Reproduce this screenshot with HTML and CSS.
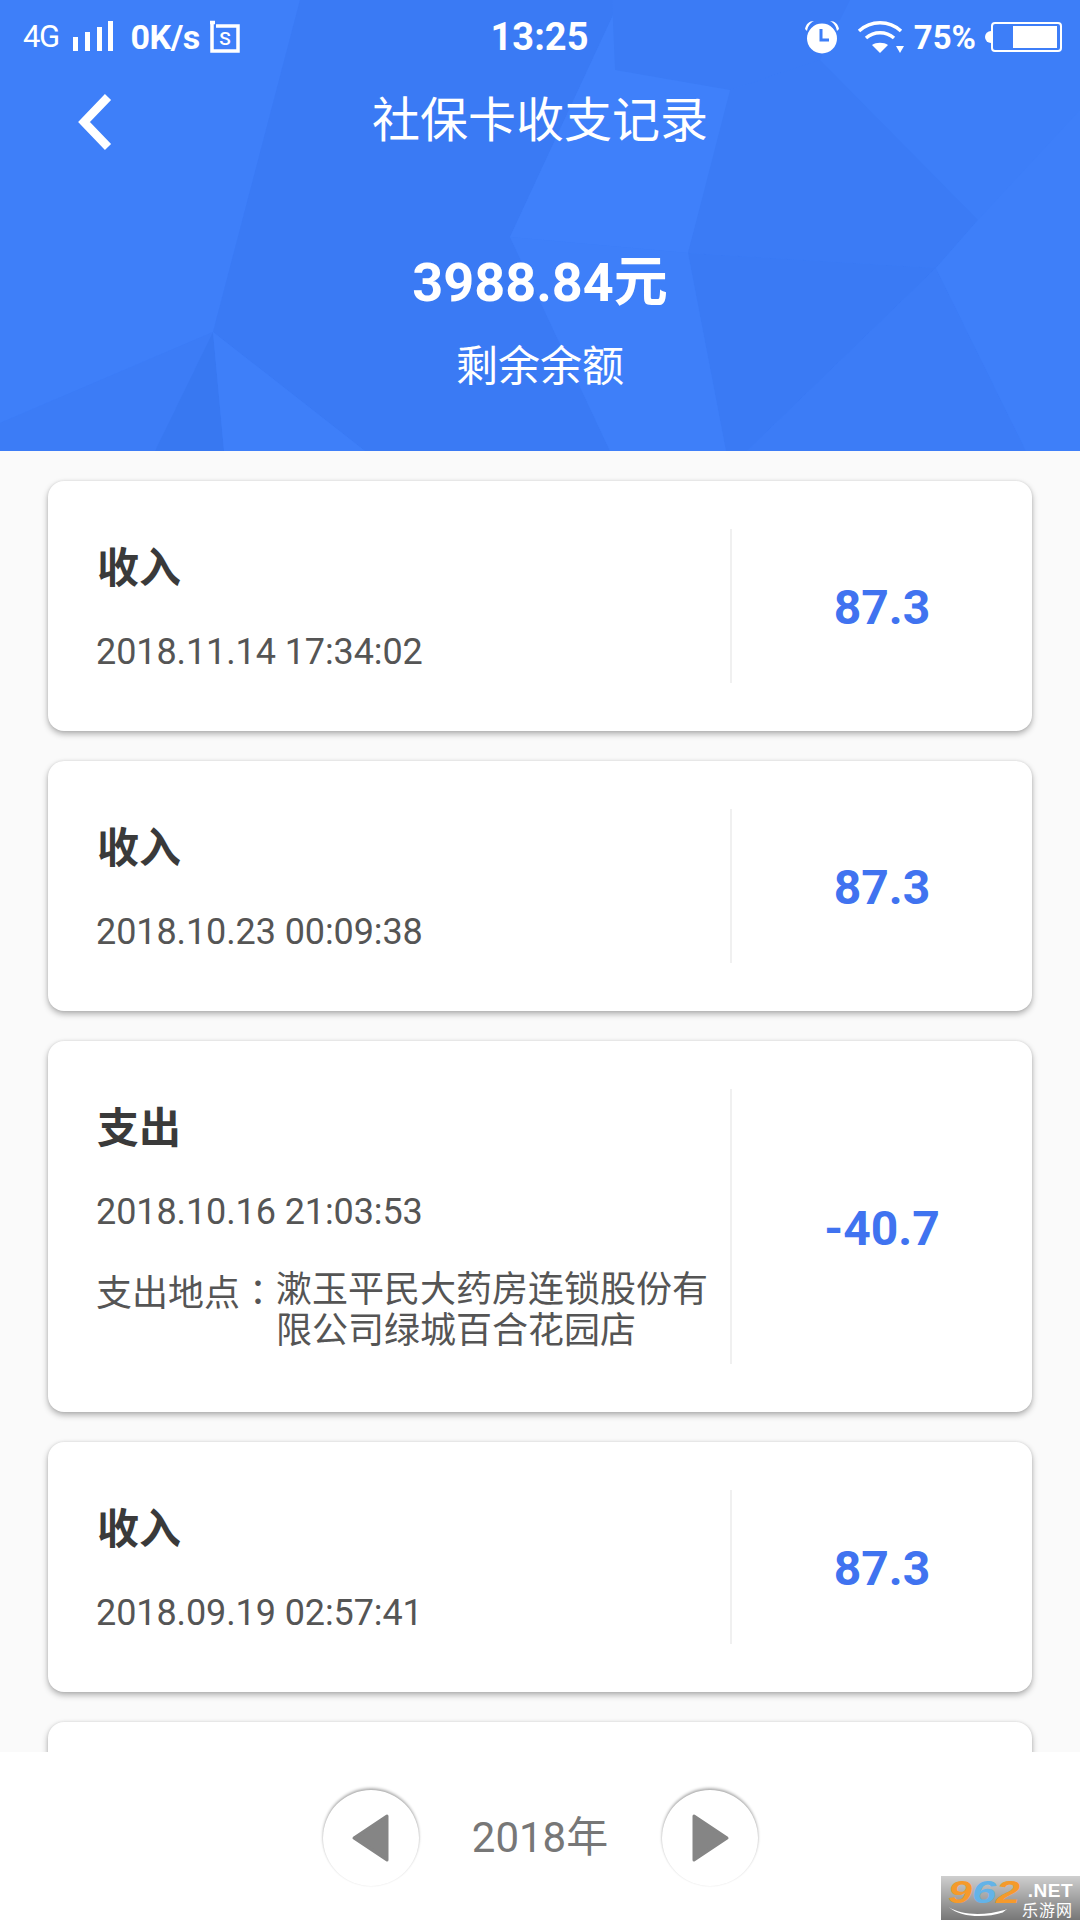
FILE: index.html
```html
<!DOCTYPE html>
<html lang="zh-CN">
<head>
<meta charset="utf-8">
<title>社保卡收支记录</title>
<link rel="stylesheet" href="styles.css">
</head>
<body>
<div class="screen">
  <header class="hero">
    <svg class="facets" viewBox="0 0 1080 451" preserveAspectRatio="none" aria-hidden="true">
      <polygon points="0,0 300,0 213,332 0,423" fill="#3e7ff9"/>
      <polygon points="300,0 620,0 510,237 610,451 365,451 213,332" fill="#3a7af4"/>
      <polygon points="0,423 213,332 155,451 0,451" fill="#3c7cf6"/>
      <polygon points="213,332 224,451 155,451" fill="#3878f1"/>
      <polygon points="213,332 365,451 224,451" fill="#3e7ff9"/>
      <polygon points="620,0 760,0 688,253 510,237" fill="#3f80fa"/>
      <polygon points="612,0 850,0 820,60 730,90 615,70" fill="#3b7bf5"/>
      <polygon points="688,253 936,268 747,451 726,451" fill="#3a7af4"/>
      <polygon points="510,237 688,253 726,451 610,451" fill="#3e7ff9"/>
      <polygon points="936,268 1026,451 747,451" fill="#3c7cf6"/>
      <polygon points="820,60 978,220 936,268 688,253 730,90" fill="#3b7bf5"/>
      <polygon points="978,220 1080,110 1080,451 1026,451 936,268" fill="#3e7ff9"/>
    </svg>
    <div class="status">
      <div class="status-side">
        <span class="net">4G</span>
        <svg class="signal" width="42" height="32" viewBox="0 0 42 32"><rect x="0" y="16" width="5" height="14" fill="#fff"/><rect x="12" y="11" width="5" height="19" fill="#fff"/><rect x="24" y="6" width="5" height="24" fill="#fff"/><rect x="35" y="0" width="5" height="30" fill="#fff"/></svg>
        <span class="speed">0K/s</span>
        <svg class="sim" width="30" height="34" viewBox="0 0 30 34"><path d="M0 2.500h5M2 4v27h26V6H6" fill="none" stroke="#fff" stroke-width="3.500"/><text x="15" y="25" text-anchor="middle" class="sim-s">S</text></svg>
      </div>
      <span class="clock">13:25</span>
      <div class="status-side status-right">
        <svg width="36" height="34" viewBox="0 0 36 34"><circle cx="18" cy="18.500" r="15" fill="#fff"/><path d="M17 9v11h8" fill="none" stroke="#3d7ef8" stroke-width="3"/><path d="M1 9C2 4 5 1 10 1 6 3 4 6 3 11zM35 9c-1-5-4-8-9-8 4 2 6 5 7 10z" fill="#fff"/></svg>
        <svg class="wifi" width="50" height="34" viewBox="0 0 50 34"><path d="M2 11C14 0 32 0 44 11" fill="none" stroke="#fff" stroke-width="3.500"/><path d="M9 18c8-7 20-7 28 0" fill="none" stroke="#fff" stroke-width="3.500"/><path d="M15 25c4-3 12-3 16 0l-8 8z" fill="#fff"/><path d="M39 26h8l-4 7z" fill="#fff"/></svg>
        <span class="pct">75%</span>
        <div class="battery"><span class="battery-tip"></span><span class="battery-body"><span class="battery-fill"></span></span></div>
      </div>
    </div>
    <div class="nav">
      <svg class="back" width="34" height="56" viewBox="0 0 34 56"><path d="M30 3L6 28l24 25" fill="none" stroke="#fff" stroke-width="8.500"/></svg>
      <h1 class="title">社保卡收支记录</h1>
    </div>
    <div class="balance">3988.84元</div>
    <div class="balance-label">剩余余额</div>
  </header>

  <main class="list">
    <article class="card">
      <div class="info"><h2 class="kind">收入</h2><p class="date">2018.11.14 17:34:02</p></div>
      <div class="money">87.3</div>
    </article>
    <article class="card">
      <div class="info"><h2 class="kind">收入</h2><p class="date">2018.10.23 00:09:38</p></div>
      <div class="money">87.3</div>
    </article>
    <article class="card">
      <div class="info">
        <h2 class="kind">支出</h2><p class="date">2018.10.16 21:03:53</p>
        <div class="place"><span class="place-label">支出地点<span class="colon" lang="zh-Hant">：</span></span><span class="place-value">漱玉平民大药房连锁股份有限公司绿城百合花园店</span></div>
      </div>
      <div class="money">-40.7</div>
    </article>
    <article class="card">
      <div class="info"><h2 class="kind">收入</h2><p class="date">2018.09.19 02:57:41</p></div>
      <div class="money">87.3</div>
    </article>
    <article class="card"></article>
  </main>

  <footer class="pager">
    <button class="round"><svg width="40" height="50" viewBox="0 0 40 50"><path d="M36 3v44L3 25z" fill="#858585" stroke="#858585" stroke-width="3" stroke-linejoin="round"/></svg></button>
    <span class="year">2018年</span>
    <button class="round"><svg width="40" height="50" viewBox="0 0 40 50"><path d="M4 3v44l33-22z" fill="#858585" stroke="#858585" stroke-width="3" stroke-linejoin="round"/></svg></button>
    <div class="mark">
      <span class="mark-num"><span class="d-o">9</span><span class="d-b">6</span><span class="d-o">2</span></span>
      <span class="mark-side"><span class="mark-net">.NET</span><span class="mark-cn">乐游网</span></span>
      <svg class="swoosh" width="60" height="11" viewBox="0 0 64 12"><path d="M0 1c14 9 38 10 62 3l2-1-5 4C40 13 14 13 0 1z" fill="#fff"/></svg>
    </div>
  </footer>
</div>
</body>
</html>
```

FILE: styles.css
```css
* { box-sizing: border-box; }
html, body { margin: 0; padding: 0; }
body { font-family: Roboto, "Noto Sans CJK SC", sans-serif; background: #fafafa; }
.screen { width: 1080px; height: 1920px; position: relative; overflow: hidden; display: flex; flex-direction: column; }

.hero { height: 451px; flex: none; position: relative; background: #3d7ef8; color: #fff; text-align: center; }
.facets { position: absolute; inset: 0; width: 100%; height: 100%; }
.status, .nav, .balance, .balance-label { position: relative; }

.status { display: grid; grid-template-columns: 1fr auto 1fr; align-items: center; height: 74px; padding: 0 18px 0 23px; }
.status-side { display: flex; align-items: center; }
.status-right { justify-content: flex-end; }
.net { font-size: 31px; line-height: 34px; letter-spacing: -1.500px; }
.signal { margin-left: 14px; }
.speed { font-size: 34px; font-weight: 700; margin-left: 16px; letter-spacing: -0.500px; }
.sim { margin-left: 10px; }
.sim-s { font: 500 19px Roboto, sans-serif; fill: #fff; }
.clock { font-size: 38px; font-weight: 700; margin-right: 6px; }
.wifi { margin-left: 17px; }
.pct { font-size: 33px; font-weight: 700; margin-left: 7px; }
.battery { display: flex; align-items: center; margin-left: 9px; }
.battery-tip { width: 6px; height: 12px; background: #fff; border-radius: 6px 0 0 6px; }
.battery-body { width: 71px; height: 30px; padding: 2px 3px 2px 20px; border: 2px solid #fff; border-radius: 4px; display: block; }
.battery-fill { display: block; height: 100%; background: #fff; }

.nav { height: 96px; display: flex; align-items: center; justify-content: center; padding-bottom: 2px; }
.back { position: absolute; left: 78px; top: 20px; }
.title { margin: 0; font-size: 48px; font-weight: 400; line-height: 60px; }
.balance { margin-top: 79px; font-size: 54px; font-weight: 700; line-height: 68px; }
.balance-label { margin-top: 24px; font-size: 42px; line-height: 52px; }

.list { flex: 1; min-height: 0; padding: 30px 48px 0; display: flex; flex-direction: column; gap: 30px; }
.card { flex: none; min-height: 250px; background: #fff; border-radius: 16px; padding: 48px 0; display: flex; box-shadow: 0 3px 6px rgba(0,0,0,.3), 0 0 3px rgba(0,0,0,.1); }
.info { width: 684px; flex: none; padding-left: 49px; padding-right: 20px; border-right: 2px solid #f0f0f0; }
.kind { margin: 14px 0 0; font-size: 42px; font-weight: 700; line-height: 52px; color: #3a3a3a; }
.date { margin: 35px 0 0 -1px; font-size: 36px; line-height: 44px; color: #555; letter-spacing: -.1px; }
.place { display: flex; margin: 36px 0 12px -1px; font-size: 36px; line-height: 41px; color: #555; }
.place-label { width: 180px; flex: none; white-space: nowrap; }
.colon { font-family: "Noto Sans CJK TC", sans-serif; }
.money { flex: 1; display: flex; align-items: center; justify-content: center; padding-top: 3px; font-size: 48px; font-weight: 700; color: #4073f0; }

.pager { height: 168px; flex: none; position: relative; z-index: 1; background: #fff; display: flex; align-items: center; justify-content: center; gap: 52.500px; padding-top: 3px; }
.round { width: 96px; height: 96px; padding: 0; border: 0; border-radius: 50%; background: #fff; display: flex; align-items: center; justify-content: center; box-shadow: 0 -2px 3px rgba(0,0,0,.3), 0 0 2px rgba(0,0,0,.08); }
.year { font-size: 42px; color: #777; width: 138px; text-align: center; white-space: nowrap; margin-bottom: 9px; }
.mark { position: absolute; right: 0; bottom: 0; width: 139px; height: 44px; background: linear-gradient(#cfcfcf, #777); display: flex; align-items: flex-start; padding: 1px 0 0 7px; }
.mark-num { width: 74px; flex: none; font: italic 700 32px/30px "Liberation Sans", sans-serif; transform: scaleX(1.35); transform-origin: left top; white-space: nowrap; }
.d-o { color: #f59a2c; }
.d-b { color: #63b3e8; }
.mark-side { display: flex; flex-direction: column; align-items: flex-end; padding-top: 3px; color: #fff; }
.mark-net { font: 700 19px/21px "Liberation Sans", sans-serif; letter-spacing: .5px; }
.mark-cn { font-size: 16px; line-height: 19px; letter-spacing: 1px; }
.swoosh { position: absolute; left: 7px; bottom: 3px; }
```
